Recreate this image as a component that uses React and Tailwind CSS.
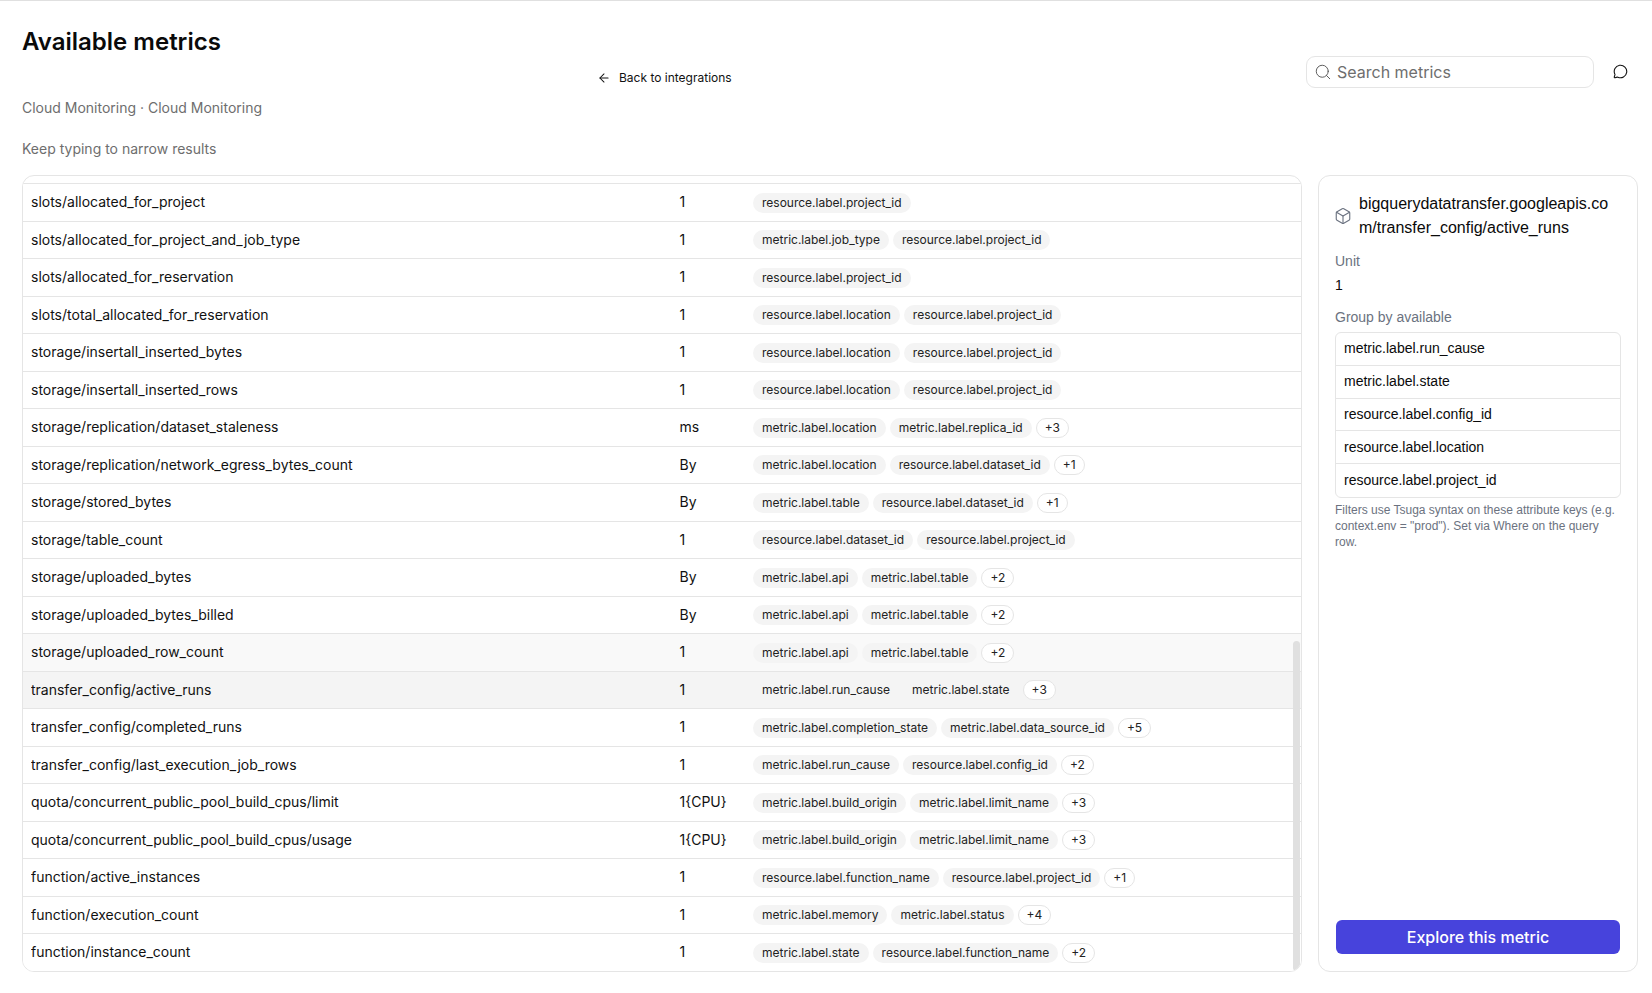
import React from "react";
import { ArrowLeft, Search, MessageCircle, Box } from "lucide-react";

const rows = [
  ["slots/allocated_for_project", "1", ["resource.label.project_id"]],
  ["slots/allocated_for_project_and_job_type", "1", ["metric.label.job_type", "resource.label.project_id"]],
  ["slots/allocated_for_reservation", "1", ["resource.label.project_id"]],
  ["slots/total_allocated_for_reservation", "1", ["resource.label.location", "resource.label.project_id"]],
  ["storage/insertall_inserted_bytes", "1", ["resource.label.location", "resource.label.project_id"]],
  ["storage/insertall_inserted_rows", "1", ["resource.label.location", "resource.label.project_id"]],
  ["storage/replication/dataset_staleness", "ms", ["metric.label.location", "metric.label.replica_id"], "+3"],
  ["storage/replication/network_egress_bytes_count", "By", ["metric.label.location", "resource.label.dataset_id"], "+1"],
  ["storage/stored_bytes", "By", ["metric.label.table", "resource.label.dataset_id"], "+1"],
  ["storage/table_count", "1", ["resource.label.dataset_id", "resource.label.project_id"]],
  ["storage/uploaded_bytes", "By", ["metric.label.api", "metric.label.table"], "+2"],
  ["storage/uploaded_bytes_billed", "By", ["metric.label.api", "metric.label.table"], "+2"],
  ["storage/uploaded_row_count", "1", ["metric.label.api", "metric.label.table"], "+2", "hover"],
  ["transfer_config/active_runs", "1", ["metric.label.run_cause", "metric.label.state"], "+3", "active"],
  ["transfer_config/completed_runs", "1", ["metric.label.completion_state", "metric.label.data_source_id"], "+5"],
  ["transfer_config/last_execution_job_rows", "1", ["metric.label.run_cause", "resource.label.config_id"], "+2"],
  ["quota/concurrent_public_pool_build_cpus/limit", "1{CPU}", ["metric.label.build_origin", "metric.label.limit_name"], "+3"],
  ["quota/concurrent_public_pool_build_cpus/usage", "1{CPU}", ["metric.label.build_origin", "metric.label.limit_name"], "+3"],
  ["function/active_instances", "1", ["resource.label.function_name", "resource.label.project_id"], "+1"],
  ["function/execution_count", "1", ["metric.label.memory", "metric.label.status"], "+4"],
  ["function/instance_count", "1", ["metric.label.state", "resource.label.function_name"], "+2"],
];

const groupKeys = [
  "metric.label.run_cause",
  "metric.label.state",
  "resource.label.config_id",
  "resource.label.location",
  "resource.label.project_id",
];

function Row({ row }) {
  const [name, unit, chips, more, state] = row;
  const bg = state === "active" ? "bg-[#f4f4f4]" : state === "hover" ? "bg-[#f9f9f9]" : "bg-white";
  return (
    <div className={`flex h-[37.5px] items-center border-b border-[#e5e5e5] pl-[8px] text-[14px] text-[#111] last:border-b-0 ${bg}`}>
      <div className="w-[648.5px] shrink-0 truncate pb-[1px]">{name}</div>
      <div className="w-[73.5px] shrink-0 pb-[1px]">{unit}</div>
      <div className="flex items-center gap-[4px] pt-[1px]">
        {chips.map((c) => (
          <span key={c} className="flex h-[20px] items-center rounded-full bg-[#f4f4f4] px-[9px] text-[12px] text-[#222]">{c}</span>
        ))}
        {more && (
          <span className="flex h-[20px] items-center rounded-full border border-[#e5e5e5] bg-white px-[8px] text-[12px] text-[#222]">{more}</span>
        )}
      </div>
    </div>
  );
}

export default function App() {
  return (
    <div className="h-[993px] overflow-hidden border-t border-[#e0e0e0] bg-white font-['Inter',sans-serif] text-[#0a0a0a]">
      <div className="flex pl-[22px] pr-[14px]">
        <div className="flex-1">
          <h1 className="mt-[25px] text-[24px] leading-[32px] font-semibold">Available metrics</h1>
          <a className="ml-[575px] mt-[12px] flex items-center gap-[8px] text-[12px] leading-[16px] text-[#111]">
            <ArrowLeft size={14} strokeWidth={1.75} />
            Back to integrations
          </a>
          <p className="mt-[12px] text-[14px] leading-[20px] text-[#6e6e6e]">Cloud Monitoring · Cloud Monitoring</p>
          <p className="mt-[21px] text-[14px] leading-[20px] text-[#6e6e6e]">Keep typing to narrow results</p>
        </div>
        <div className="mt-[55px] flex items-start">
          <div className="flex h-[32px] w-[288px] items-center gap-[5px] rounded-[9px] border border-[#e5e5e5] pl-[7px]">
            <Search size={18} strokeWidth={1.25} className="text-[#555]" />
            <span className="text-[16px] text-[#6e6e6e]">Search metrics</span>
          </div>
          <MessageCircle size={15} strokeWidth={1.75} className="ml-[19px] mr-[10px] mt-[8px] text-[#111]" />
        </div>
      </div>
      <div className="mt-[16px] flex gap-[16px] pl-[22px] pr-[14px]">
        <div className="relative h-[797px] w-[1280px] shrink-0 overflow-hidden rounded-[12px] border border-[#e5e5e5]">
          <div className="h-[8px] border-b border-[#e5e5e5]" />
          {rows.map((r) => (
            <Row key={r[0]} row={r} />
          ))}
          <div className="absolute right-[1px] top-[465px] h-[330px] w-[7px] rounded-full bg-[#e0e0e0]" />
        </div>
        <div className="flex h-[797px] flex-1 flex-col rounded-[12px] border border-[#e5e5e5] px-[16px] pb-[17px] pt-[16px] font-['Liberation_Sans',sans-serif]">
          <div className="flex items-center gap-[7px]">
            <Box size={18} strokeWidth={1.5} className="-ml-[1px] shrink-0 text-[#6b7280]" />
            <div className="text-[16px] leading-[24px] break-all text-[#0a0a0a]">bigquerydatatransfer.googleapis.com/transfer_config/active_runs</div>
          </div>
          <div className="mt-[11px] text-[14px] leading-[20px] text-[#6b7280]">Unit</div>
          <div className="mt-[4px] text-[14px] leading-[20px] text-[#0a0a0a]">1</div>
          <div className="mt-[12px] text-[14px] leading-[20px] text-[#6b7280]">Group by available</div>
          <div className="mt-[5px] rounded-[6px] border border-[#e5e5e5]">
            {groupKeys.map((k) => (
              <div key={k} className="flex h-[32.8px] items-center border-b border-[#e5e5e5] px-[8px] text-[14px] text-[#0a0a0a] last:border-b-0">{k}</div>
            ))}
          </div>
          <p className="mt-[4px] text-[12px] leading-[16px] text-[#6b7280]">Filters use Tsuga syntax on these attribute keys (e.g. context.env = "prod"). Set via Where on the query row.</p>
          <button className="mx-[1px] mt-auto flex h-[34px] items-center justify-center rounded-[6px] bg-[#4743dc] font-['Inter',sans-serif] text-[16px] font-medium text-white">Explore this metric</button>
        </div>
      </div>
    </div>
  );
}
